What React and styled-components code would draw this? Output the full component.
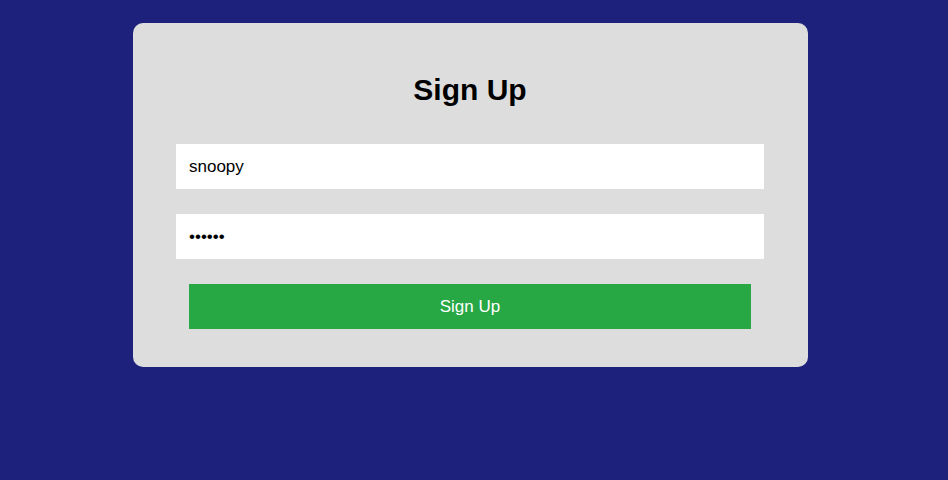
import React from "react";
import styled, { createGlobalStyle } from "styled-components";

const Global = createGlobalStyle`
  html, body {
    margin: 0;
    padding: 0;
    background: #1e217c;
    font-family: "Liberation Sans", Arial, sans-serif;
  }
  #root {
    min-height: 480px;
  }
`;

const Page = styled.div`
  min-height: 480px;
  background: #1e217c;
  padding-top: 23px;
  padding-left: 133px;
  box-sizing: border-box;
`;

const Card = styled.form`
  width: 675px;
  box-sizing: border-box;
  background: #dddddd;
  border-radius: 10px;
  padding: 50px 44px 38px 43px;
  display: flex;
  flex-direction: column;
  align-items: center;
`;

const Title = styled.h2`
  margin: 0 0 37px;
  font-size: 30px;
  line-height: 34px;
  font-weight: 700;
  color: #000;
  text-align: center;
`;

const Fields = styled.div`
  display: flex;
  flex-direction: column;
  align-items: center;
  gap: 25px;
  width: 100%;
`;

const Input = styled.input`
  width: 588px;
  height: 45px;
  box-sizing: border-box;
  border: none;
  outline: none;
  background: #ffffff;
  padding: 0 13px;
  font-family: "Liberation Sans", Arial, sans-serif;
  font-size: 17px;
  color: #000;
`;

const Button = styled.button`
  width: 562px;
  height: 45px;
  border: none;
  background: #28a745;
  color: #ffffff;
  font-family: "Liberation Sans", Arial, sans-serif;
  font-size: 17px;
  cursor: pointer;
`;

export default function App() {
  return (
    <>
      <Global />
      <Page>
        <Card onSubmit={(e) => e.preventDefault()}>
          <Title>Sign Up</Title>
          <Fields>
            <Input type="text" defaultValue="snoopy" />
            <Input type="password" defaultValue="123456" />
            <Button type="submit">Sign Up</Button>
          </Fields>
        </Card>
      </Page>
    </>
  );
}
